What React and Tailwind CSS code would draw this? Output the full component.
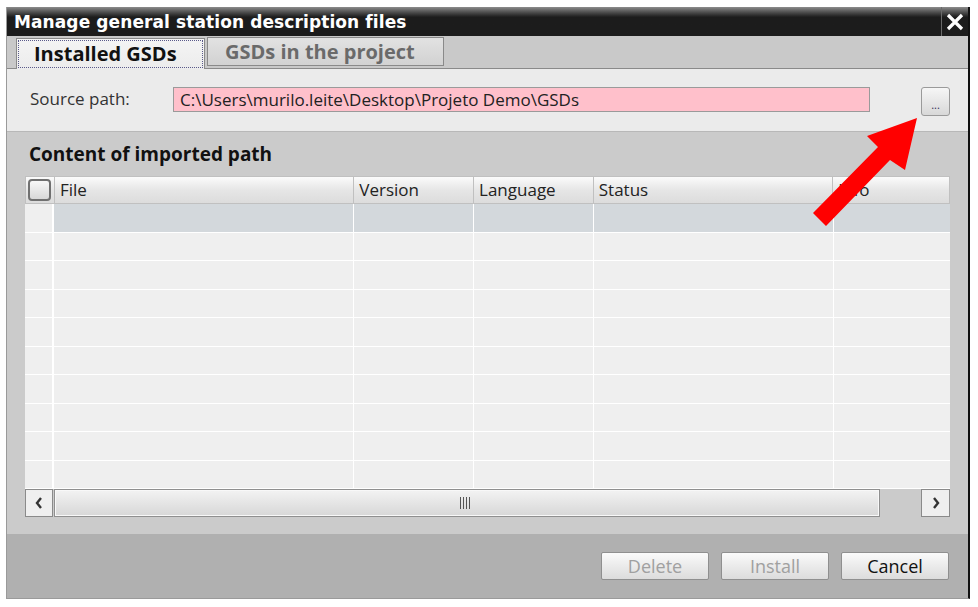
import React from "react";

const columns = [
  { name: "File", w: "w-[300px]" },
  { name: "Version", w: "w-[120px]" },
  { name: "Language", w: "w-[120px]" },
  { name: "Status", w: "w-[240px]" },
  { name: "Info", w: "w-[116px]" },
];

const rows = Array.from({ length: 10 }, (_, i) => i);

const FooterButton = ({ label, disabled }) => (
  <button
    className={`w-[108px] h-[28px] border border-[#8f8f8f] rounded-[2px] bg-gradient-to-b from-[#fafafa] to-[#dcdcdc] text-[18px] leading-[26px] ${
      disabled ? "text-[#a0a0a0]" : "text-[#111]"
    }`}
  >
    {label}
  </button>
);

const App = () => {
  return (
    <div className="relative w-[978px] h-[607px] bg-white pt-[7px] pl-[6px] font-['Open_Sans',sans-serif]">
      <div className="w-[964px] h-[592px] flex flex-col border-l border-[#9a9a9a] border-r-2 border-r-[#111] border-b border-b-[#9a9a9a]">
        {/* Title bar */}
        <div className="h-[29px] flex items-stretch bg-gradient-to-b from-[#8c8c8c] via-[#1c1c1c] via-[35%] to-[#1c1c1c]">
          <div className="flex-1 pl-[7px] pt-[3px] text-white font-bold text-[17px] leading-[24px] font-['DejaVu_Sans',sans-serif] tracking-[0.1px]">
            Manage general station description files
          </div>
          <div className="w-[27px] border-l border-[#6a6a6a] flex items-center justify-center">
            <svg width="18" height="18" viewBox="0 0 18 18">
              <path d="M2 2 L16 16 M16 2 L2 16" stroke="white" strokeWidth="3.2" />
            </svg>
          </div>
        </div>

        {/* Tabs */}
        <div className="h-[33px] bg-[#c9c9c9] border-b border-[#8a8a8a] flex items-end pl-[9px] gap-[2px]">
          <div className="w-[189px] h-[31px] -mb-px bg-gradient-to-b from-[#f4f4f4] to-[#ececec] border border-[#8a8a8a] border-b-0 p-[1px]">
            <div className="h-full border border-dotted border-[#5a5a8a] flex items-center pl-[15px] text-[20px] leading-[26px] font-bold text-[#111]">
              Installed GSDs
            </div>
          </div>
          <div className="w-[237px] h-[29px] mb-[2px] bg-gradient-to-b from-[#e2e2e2] to-[#d2d2d2] border border-[#8a8a8a] flex items-center pl-[17px] text-[20px] leading-[26px] font-bold text-[#6a6a6a]">
            GSDs in the project
          </div>
        </div>

        {/* Source path */}
        <div className="h-[63px] bg-[#ebebeb] border-b border-[#b8b8b8] flex items-start pt-[18px] pl-[23px] pr-[18px]">
          <span className="w-[143px] text-[17px] leading-[24px] text-[#333]">Source path:</span>
          <div className="w-[697px] h-[25px] bg-[#ffc0cb] border border-[#9a9a9a] pl-[6px] text-[17px] leading-[23px] text-[#222]">
            C:\Users\murilo.leite\Desktop\Projeto Demo\GSDs
          </div>
          <div className="ml-auto w-[29px] h-[29px] border border-[#9a9a9a] rounded-[3px] bg-gradient-to-b from-[#f6f6f6] to-[#d8d8d8] flex items-end justify-center pb-[5px] text-[11px] leading-[11px] text-[#335]">
            ...
          </div>
        </div>

        {/* Content */}
        <div className="flex-1 bg-[#cbcbcb] pl-[18px] pt-[9px]">
          <div className="pl-[4px] text-[19px] font-bold text-[#111] h-[35px] leading-[26px]">
            Content of imported path
          </div>
          <div className="w-[925px]">
            {/* Header */}
            <div className="flex h-[28px] border border-[#c0c0c0] bg-gradient-to-b from-[#fbfbfb] via-[#e6e6e6] to-[#dcdcdc] text-[17px] leading-[24px] text-[#222]">
              <div className="w-[29px] flex items-center justify-center border-r border-[#c0c0c0]">
                <div className="w-[23px] h-[22px] rounded-[4px] border-2 border-[#707070] bg-gradient-to-b from-[#f8f8f8] to-[#d8d8d8]" />
              </div>
              {columns.map((c, i) => (
                <div
                  key={c.name}
                  className={`${c.w} pl-[5px] flex items-center ${i < columns.length - 1 ? "border-r border-[#c0c0c0]" : ""}`}
                >
                  {c.name}
                </div>
              ))}
            </div>
            {/* Rows */}
            {rows.map((r) => (
              <div key={r} className="flex h-[28.5px] border-b border-white">
                <div className="w-[29px] bg-[#efefef] border-r-2 border-white" />
                {columns.map((c, i) => (
                  <div
                    key={c.name}
                    className={`${c.w} ${r === 0 ? "bg-[#d3d8dc]" : "bg-[#efefef]"} ${i < columns.length - 1 ? "border-r border-white" : ""}`}
                  />
                ))}
              </div>
            ))}
            {/* Scrollbar */}
            <div className="flex h-[28px] items-stretch">
              <div className="w-[28px] border border-[#8a8a8a] bg-[#efefef] flex items-center justify-center">
                <svg width="10" height="14" viewBox="0 0 10 14">
                  <path d="M7 2 L3 7 L7 12" stroke="#333" strokeWidth="2.4" fill="none" />
                </svg>
              </div>
              <div className="ml-[1px] w-[826px] border border-[#8f8f8f] p-[1px] bg-[#f8f8f8]">
                <div className="h-full bg-gradient-to-b from-[#f2f2f2] to-[#d8d8d8] flex items-center pl-[403px]">
                  <svg width="12" height="12" viewBox="0 0 12 12">
                    <path d="M1.5 0 V12 M4.5 0 V12 M7.5 0 V12 M10.5 0 V12" stroke="#555" strokeWidth="1" />
                  </svg>
                </div>
              </div>
              <div className="flex-1" />
              <div className="w-[29px] border border-[#8a8a8a] bg-[#efefef] flex items-center justify-center">
                <svg width="10" height="14" viewBox="0 0 10 14">
                  <path d="M3 2 L7 7 L3 12" stroke="#333" strokeWidth="2.4" fill="none" />
                </svg>
              </div>
            </div>
          </div>
        </div>

        {/* Footer */}
        <div className="h-[64px] bg-[#b0b0b0] flex items-start justify-end gap-[12px] pt-[18px] pr-[19px]">
          <FooterButton label="Delete" disabled />
          <FooterButton label="Install" disabled />
          <FooterButton label="Cancel" />
        </div>
      </div>

      {/* Annotation arrow */}
      <svg className="absolute left-0 top-0 pointer-events-none" width="978" height="607">
        <polygon
          points="917,118 905,170 890,160 826,226 813,213 878,147 867,136"
          fill="#ff0000"
        />
      </svg>
    </div>
  );
};

export default App;
